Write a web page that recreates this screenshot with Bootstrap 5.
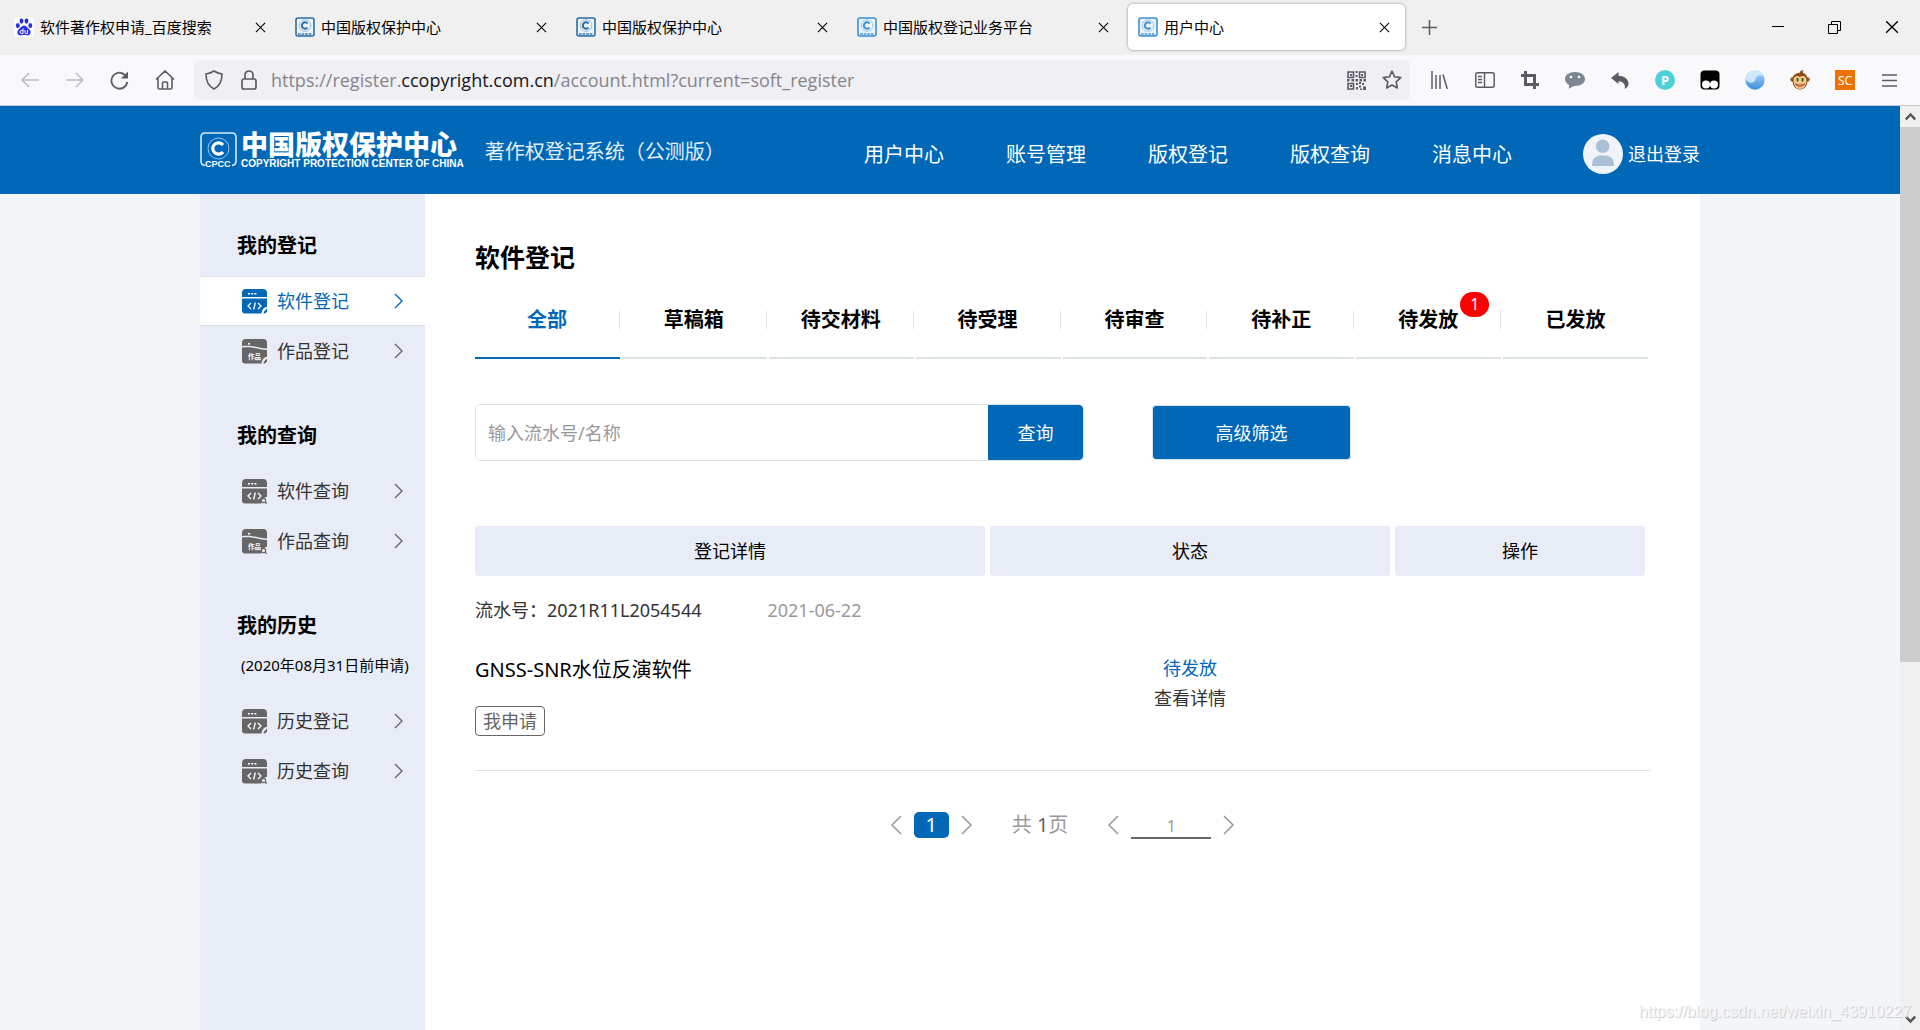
<!DOCTYPE html>
<html lang="zh-CN">
<head>
<meta charset="utf-8">
<meta name="viewport" content="width=device-width, initial-scale=1">
<title>用户中心</title>
<link href="https://cdn.jsdelivr.net/npm/bootstrap@5.3.0/dist/css/bootstrap.min.css" rel="stylesheet">
<style>
:root { --brand: #0068b7; --pale: #e8ecf6; --line: #dce4e8; }
body { font-family: "Noto Sans", "Noto Sans CJK SC", sans-serif; font-size: 18px; line-height: 30px; color: #333; background: #f2f6f9; }
a { color: inherit; text-decoration: none; }
svg { display: block; flex: none; }
button { font: inherit; color: inherit; }
.plain { border: 0; background: none; padding: 0; display: flex; align-items: center; justify-content: center; }

/* browser frame */
.tabstrip { height: 55px; background: #f0f0f0; padding: 4px 0 4px 4px; gap: 4px; font-size: 15px; color: #000; }
.btab { width: 277px; height: 46px; padding: 0 15px 0 10px; gap: 6px; border-radius: 5px; }
.btab.active { background: #fff; box-shadow: 0 0 3px #8888a0; }
.winbtn { width: 57px; height: 46px; }
.toolbar { height: 51px; background: #f9f9fb; border-bottom: 1px solid #c9c9cf; padding: 0 8px 0 7px; color: #5b5b66; }
.tool { width: 45px; height: 40px; }
.urlbar { background: #f0eff4; height: 40px; border-radius: 5px; padding: 0 8px 0 10px; margin: 0 7px; }
.urltext { font-family: "Open Sans", "Noto Sans", sans-serif; font-size: 18px; color: #85858c; white-space: nowrap; padding-left: 13px; }
.urltext b { font-weight: 400; color: #15141a; }

/* page */
.wrap { max-width: 1500px; width: 100%; margin: 0 auto; }
.topbar { background: var(--brand); color: #fff; height: 88px; }
.logo-cn { font-size: 27px; line-height: 28px; font-weight: 900; }
.logo-en { font-size: 10px; line-height: 10px; font-weight: 700; font-family: "Liberation Sans", sans-serif; white-space: nowrap; }
.sys-name { font-size: 20px; color: #e4f0fa; margin-left: 21px; padding-top: 4px; }
.mainnav { gap: 62px; font-size: 20px; margin-right: 71px; padding-top: 10px; }
.logout { padding-top: 8px; gap: 5px; }
.side { width: 225px; flex: none; background: var(--pale); }
.side h2 { font-size: 20px; line-height: 30px; font-weight: 700; color: #000; margin: 0; padding: 45px 37px 15px; }
.side h2.first { padding-top: 37px; }
.side p { font-size: 15px; color: #000; margin: 0; padding: 0 0 21px 41px; line-height: 19px; white-space: nowrap; }
.side-link { height: 50px; padding: 0 22px 0 42px; gap: 10px; color: #333; }
.side-link svg { color: #666; }
.side-link.active { background: #fff; border: solid var(--line); border-width: 1px 0; }
.side-link.active, .side-link.active svg { color: var(--brand); }
.content { background: #fff; padding: 48px 50px 0; min-width: 0; }
.content h1 { font-size: 25px; line-height: 30px; font-weight: 700; color: #000; margin: 0 0 39px; }
.stat { flex: 1 1 0; font-size: 20px; font-weight: 700; color: #000; height: 48px; border-bottom: 2px solid var(--line); margin-right: 2px; text-align: center; position: relative; }
.stat .lbl { display: block; border-right: 1px solid var(--line); line-height: 18px; height: 18px; }
.stat:last-child .lbl { border: 0; }
.stat.active { color: var(--brand); border-color: var(--brand); }
.count { position: absolute; left: 104px; top: -19px; width: 29px; height: 25px; border-radius: 13px; background: red; color: #fff; font-size: 16px; line-height: 25px; font-weight: 400; }
.finder { margin-top: 45px; }
.searchbox { width: 609px; height: 57px; border: 1px solid var(--line); border-radius: 5px; overflow: hidden; }
.searchbox input { border: 0; outline: 0; padding: 0 12px; min-width: 0; }
.searchbox input::placeholder { color: #999; }
.searchbox button { width: 95px; background: var(--brand); color: #fff; border: 0; border-radius: 0 4px 4px 0; }
.filter { width: 199px; height: 55px; background: var(--brand); color: #fff; border: 1px solid var(--line); border-radius: 4px; margin-left: 68px; }
.records { width: 100%; table-layout: fixed; border-bottom: 1px solid var(--line); margin-top: 65px; }
.records th { font-weight: 400; color: #000; text-align: center; padding: 0 5px 0 0; }
.records th div { background: var(--pale); border-radius: 3px; line-height: 50px; }
.records td { padding: 0 5px 0 0; vertical-align: top; }
.c-state { width: 405px; } .c-act { width: 255px; }
.rec-head { padding: 19px 0 28px; gap: 66px; }
.rec-date { color: #999; }
.rec-name { font-size: 20px; color: #000; padding: 2px 0 21px; }
.rec-tag { padding-bottom: 34px; }
.tagbox { display: block; width: fit-content; border: 1px solid #666; border-radius: 4px; color: #666; line-height: 28px; padding: 0 7px; }
.state { color: var(--brand); }
.pager { color: #999; margin-top: 39px; height: 30px; font-size: 20px; }
.cur { width: 35px; height: 26px; border-radius: 5px; background: var(--brand); color: #fff; border: 0; line-height: 26px; padding: 0; margin: 0 12px; }
.total { margin: 0 39px; }
.total .num { color: #666; }
.goto { width: 80px; height: 28px; border: 0; border-bottom: 2px solid #666; color: #999; text-align: center; outline: 0; padding: 4px 0 0; margin: 0 12px; font-size: 16px; background: none; }
.vscroll { width: 20px; flex: none; background: #f0f0f0; }
.vscroll .thumb { background: #cdcdcd; height: 535px; }
.vscroll button { width: 20px; height: 21px; color: #555; }
.wmark { position: absolute; right: 9px; bottom: 3px; font: 16px/30px "Liberation Sans", sans-serif; color: #f6f7f9; text-shadow: 1px 1px 1px #c4c8cc; }
</style>
<script src="https://cdn.jsdelivr.net/npm/bootstrap@5.3.0/dist/js/bootstrap.bundle.min.js"></script>
</head>
<body class="d-flex flex-column min-vh-100 position-relative">
<svg class="d-none" aria-hidden="true">
  <symbol id="x" viewBox="0 0 12 12"><path d="M1 1l10 10M11 1L1 11" stroke="currentColor" stroke-width="1.2" fill="none"/></symbol>
  <symbol id="fav" viewBox="0 0 20 20"><rect x="1" y="1" width="18" height="18" rx="2" fill="#eaf4fa" stroke="currentColor" stroke-width="1.6"/><circle cx="10" cy="8.500" r="5.800" fill="none" stroke="currentColor" stroke-width=".7" opacity=".6"/><path d="M12.500 6.500a3.200 3.200 0 1 0 0 4" fill="none" stroke="currentColor" stroke-width="2"/><path d="M3 17.300h14" stroke="currentColor" stroke-width="2.400" stroke-dasharray="2.600 1" opacity=".7"/></symbol>
  <symbol id="chev" viewBox="0 0 9 16"><path d="M1 1l7 7-7 7" stroke="currentColor" stroke-width="1.400" fill="none"/></symbol>
  <symbol id="pr" viewBox="0 0 12 20"><path d="M1 1l9 9-9 9" stroke="currentColor" stroke-width="1.500" fill="none"/></symbol>
  <symbol id="pl" viewBox="0 0 12 20"><path d="M11 1l-9 9 9 9" stroke="currentColor" stroke-width="1.500" fill="none"/></symbol>
  <symbol id="code" viewBox="0 0 25 25"><path d="M0 8V4a4 4 0 0 1 4-4h17a4 4 0 0 1 4 4v4zM0 9.400h25V18c-3 0-5 2.500-5.500 6.500H3a3 3 0 0 1-3-3z" fill="currentColor"/><path d="M6 4.700h2M9.200 4.700h2M12.400 4.700h2" stroke="#fff" stroke-width="1.500"/><path d="M9 14l-3 3 3 3M16 14l3 3-3 3M13.300 13.500l-1.600 7" stroke="#fff" stroke-width="1.300" fill="none"/></symbol>
  <symbol id="work" viewBox="0 0 25 25"><path d="M0 7V4a4 4 0 0 1 4-4h17a4 4 0 0 1 4 4v5.500c-8 0-14-4-25-2.500zM0 8.500c11-1.500 17 2.500 25 2.500v7c-3 0-5 2.500-5.500 6.500H3a3 3 0 0 1-3-3z" fill="currentColor"/><path d="M6 4.700h2" stroke="#fff" stroke-width="1.500"/><text x="6" y="19.500" font-size="6.500" font-weight="700" fill="#fff">作品</text></symbol>
  <symbol id="pen" viewBox="0 0 25 25"><path d="M21.500 24.500l.5-2 3-3v3l-2 2z" fill="currentColor"/></symbol>
  <symbol id="lens" viewBox="0 0 25 25"><circle cx="21.500" cy="21.500" r="2.200" fill="#e8ecf6" stroke="currentColor" stroke-width="1.200"/><path d="M23 23l2 2" stroke="currentColor" stroke-width="1.200"/></symbol>
</svg>

<header>
  <div class="tabstrip d-flex align-items-start">
    <div class="btab d-flex align-items-center">
      <svg width="20" height="20" viewBox="0 0 20 20"><rect width="20" height="20" rx="3" fill="#fff"/><g fill="#2932e1"><ellipse cx="3.800" cy="8.500" rx="2" ry="2.600"/><ellipse cx="7.500" cy="4" rx="1.900" ry="2.700"/><ellipse cx="12.500" cy="4" rx="1.900" ry="2.700"/><ellipse cx="16.300" cy="8.500" rx="2" ry="2.600"/><path d="M10 8.500c2.500 0 3.500 2.500 5.500 4.300 2.300 2.200 1 5.700-2 5.700-1.500 0-2-.4-3.500-.4s-2 .4-3.500.4c-3 0-4.300-3.500-2-5.700C6.500 11 7.500 8.500 10 8.500z"/></g><path d="M9 11.500v5H7.500a1.500 1.500 0 0 1 0-3H9M11 13v2.500q0 1 1 1h1.500V13" fill="none" stroke="#fff" stroke-width="1"/></svg>
      <a href="#" class="flex-grow-1">软件著作权申请_百度搜索</a>
      <button class="plain" aria-label="关闭"><svg width="11" height="11"><use href="#x"/></svg></button>
    </div>
    <div class="btab d-flex align-items-center"><svg width="20" height="20" color="#2c6fa3"><use href="#fav"/></svg><a href="#" class="flex-grow-1">中国版权保护中心</a><button class="plain" aria-label="关闭"><svg width="11" height="11"><use href="#x"/></svg></button></div>
    <div class="btab d-flex align-items-center"><svg width="20" height="20" color="#2c6fa3"><use href="#fav"/></svg><a href="#" class="flex-grow-1">中国版权保护中心</a><button class="plain" aria-label="关闭"><svg width="11" height="11"><use href="#x"/></svg></button></div>
    <div class="btab d-flex align-items-center"><svg width="20" height="20" color="#3d8fd0"><use href="#fav"/></svg><a href="#" class="flex-grow-1">中国版权登记业务平台</a><button class="plain" aria-label="关闭"><svg width="11" height="11"><use href="#x"/></svg></button></div>
    <div class="btab active d-flex align-items-center"><svg width="20" height="20" color="#3d8fd0"><use href="#fav"/></svg><a href="#" class="flex-grow-1">用户中心</a><button class="plain" aria-label="关闭"><svg width="11" height="11"><use href="#x"/></svg></button></div>
    <button class="plain winbtn me-auto" aria-label="新标签页"><svg width="15" height="15" viewBox="0 0 15 15" class="me-3"><path d="M7.500 0v15M0 7.500h15" stroke="#5b5b66" stroke-width="1.500"/></svg></button>
    <div class="d-flex">
      <button class="plain winbtn" aria-label="最小化"><svg width="12" height="12" viewBox="0 0 12 12"><path d="M0 5.500h12" stroke="#000"/></svg></button>
      <button class="plain winbtn" aria-label="还原"><svg width="13" height="13" viewBox="0 0 13 13"><path d="M.5 3.500h9v9h-9zM3.500 3V.5h9v9H10" fill="none" stroke="#000"/></svg></button>
      <button class="plain winbtn" aria-label="关闭窗口"><svg width="14" height="14"><use href="#x"/></svg></button>
    </div>
  </div>
  <div class="toolbar d-flex align-items-center">
    <button class="plain tool" aria-label="后退"><svg width="18" height="16" viewBox="0 0 18 16"><path d="M18 8H1M8 1L1 8l7 7" fill="none" stroke="#bcbcc2" stroke-width="1.500"/></svg></button>
    <button class="plain tool" aria-label="前进"><svg width="18" height="16" viewBox="0 0 18 16"><path d="M0 8h17M10 1l7 7-7 7" fill="none" stroke="#bcbcc2" stroke-width="1.500"/></svg></button>
    <button class="plain tool" aria-label="刷新"><svg width="19" height="19" viewBox="0 0 19 19"><path d="M16.500 6A8 8 0 1 0 17.300 11" fill="none" stroke="currentColor" stroke-width="1.800"/><path d="M18 .5v7h-7z" fill="currentColor"/></svg></button>
    <button class="plain tool" aria-label="主页"><svg width="20" height="20" viewBox="0 0 20 20"><path d="M1 9.500L10 1l9 8.500M3 8v9.500q0 1.500 1.500 1.500h11q1.500 0 1.500-1.500V8M7.500 19v-6q0-1 1-1h3q1 0 1 1v6" fill="none" stroke="currentColor" stroke-width="1.600"/></svg></button>
    <div class="urlbar d-flex align-items-center flex-grow-1">
      <svg width="20" height="20" viewBox="0 0 20 20" class="me-3"><path d="M10 1c3 2 5 2.500 8 3 0 7-2 12-8 15C4 16 2 11 2 4c3-.5 5-1 8-3z" fill="none" stroke="currentColor" stroke-width="1.600"/></svg>
      <svg width="18" height="20" viewBox="0 0 18 20"><rect x="2" y="9" width="14" height="10" rx="2" fill="none" stroke="currentColor" stroke-width="1.700"/><path d="M5 9V5a4 4 0 0 1 8 0v4" fill="none" stroke="currentColor" stroke-width="1.700"/></svg>
      <div class="urltext flex-grow-1">https://register.<b>ccopyright.com.cn</b>/account.html?current=soft_register</div>
      <button class="plain me-3" aria-label="二维码"><svg width="19" height="19" viewBox="0 0 19 19"><g fill="none" stroke="currentColor" stroke-width="1.600"><path d="M1 1h5.500v5.500H1zM12.500 1H18v5.500h-5.500zM1 12.500h5.500V18H1z"/></g><path d="M3 3h2v2H3zM14 3h2v2h-2zM3 14h2v2H3zM8.500 0h2v2h-2zM8.500 4h2v2h-2zM0 8h2.500v2.500H0zM4.500 8H7v2.500H4.500zM8.500 8H11v2.500H8.500zM12.500 8H15v2.500h-2.500zM16.500 8H19v2.500h-2.500zM9 12h2v2H9zM12 11h2v2h-2zM15 12h2v2h-2zM12 14.500h2v2h-2zM9 16h2v2.500H9zM16 15.500h3V19h-3zM13 17.500h2V19h-2z" fill="currentColor"/></svg></button>
      <button class="plain" aria-label="书签"><svg width="20" height="20" viewBox="0 0 20 20"><path d="M10 1.200l2.600 5.600 6.100.8-4.500 4.200 1.200 6.200L10 15l-5.400 3 1.200-6.200L1.300 7.600l6.100-.8z" fill="none" stroke="currentColor" stroke-width="1.600" stroke-linejoin="round"/></svg></button>
    </div>
    <div class="d-flex">
      <button class="plain tool" aria-label="书库"><svg width="17" height="18" viewBox="0 0 17 18"><path d="M1 0v18M5 4v14M9 4v14M12 3.500L16.300 18" stroke="currentColor" stroke-width="1.500" fill="none"/></svg></button>
      <button class="plain tool" aria-label="侧栏"><svg width="20" height="16" viewBox="0 0 20 16"><rect x=".8" y=".8" width="18.400" height="14.400" rx="2" fill="none" stroke="currentColor" stroke-width="1.500"/><path d="M9.500 1v14M3 4.500h4M3 7.500h4M3 10.500h4" stroke="currentColor" stroke-width="1.400"/></svg></button>
      <button class="plain tool" aria-label="截图"><svg width="18" height="18" viewBox="0 0 18 18"><path d="M4.500 0v13.500H18M0 4.500h13.500V18" fill="none" stroke="currentColor" stroke-width="3"/></svg></button>
      <button class="plain tool" aria-label="聊天"><svg width="20" height="17" viewBox="0 0 20 17"><path d="M10 0c6 0 10 3 10 7s-4 7-10 7c-2 0-3 1.500-7 2.700 1.500-1.500 1.300-2.700.8-4C1.500 11.500 0 9.500 0 7c0-4 4-7 10-7z" fill="#7b8792"/><circle cx="6" cy="5" r="1.300" fill="#fff"/><circle cx="14" cy="5" r="1.300" fill="#fff"/></svg></button>
      <button class="plain tool" aria-label="撤销"><svg width="18" height="17" viewBox="0 0 18 17"><path d="M0 6l7.500-6v3.700C14 4 17.500 7.500 17.500 11.500c0 2.500-1.500 4.500-4 5.500 1.500-4-1-7.500-6-7.700V12z" fill="currentColor"/></svg></button>
      <button class="plain tool" aria-label="P"><svg width="20" height="20" viewBox="0 0 20 20"><circle cx="10" cy="10" r="10" fill="#4dd0d8"/><text x="6" y="14.500" font-size="13" font-weight="700" fill="#fff">P</text></svg></button>
      <button class="plain tool" aria-label="脚本"><svg width="20" height="20" viewBox="0 0 20 20"><rect x=".5" y=".5" width="19" height="19" rx="4" fill="#000"/><circle cx="6" cy="14.500" r="4" fill="#fff"/><circle cx="14" cy="14.500" r="4" fill="#fff"/></svg></button>
      <button class="plain tool" aria-label="水球"><svg width="20" height="20" viewBox="0 0 20 20"><defs><linearGradient id="ball" x2="0" y2="1"><stop stop-color="#b9dcf5"/><stop offset="1" stop-color="#3a8ee0"/></linearGradient></defs><circle cx="10" cy="10" r="9.700" fill="url(#ball)"/><path d="M.8 10C1.500 4 5 1 10 .8c4 .2 7 2 8.500 5-5-1.500-7 0-8 3.500S6 14.500.8 10z" fill="#d9eefb" opacity=".85"/></svg></button>
      <button class="plain tool" aria-label="猴子"><svg width="20" height="20" viewBox="0 0 20 20"><circle cx="2.500" cy="9.500" r="2.200" fill="#9b5418"/><circle cx="17.500" cy="9.500" r="2.200" fill="#9b5418"/><path d="M2.500 10c0-5 3-7 7-7 0-1.500 2-3 4-3-1 1-1 2 0 3.300 3 .7 4 3.700 4 6.700 0 6-3 9.500-7.500 9.500S2.500 16 2.500 10z" fill="#8c4a15"/><path d="M3.500 10c0-4 4.500-5 6.500-3 2-2 6.500-1 6.500 3 0 5-2 9-6.500 9S3.500 15 3.500 10z" fill="#f3c987"/><path d="M7.500 8v3.500M12.500 8v3.500" stroke="#185a3c" stroke-width="1.700"/><path d="M5.500 14c2.500 1.500 6.500 1.500 9 0-1 3-8 3-9 0z" fill="#fff" stroke="#a11" stroke-width=".8"/></svg></button>
      <button class="plain tool" aria-label="SC"><svg width="20" height="20" viewBox="0 0 20 20"><rect width="20" height="20" fill="#ee7203"/><text x="3" y="14.500" font-size="12" fill="#fff">SC</text></svg></button>
      <button class="plain tool" aria-label="菜单"><svg width="15" height="13" viewBox="0 0 15 13"><path d="M0 1h15M0 6.500h15M0 12h15" stroke="currentColor" stroke-width="1.500"/></svg></button>
    </div>
  </div>
</header>

<div class="d-flex flex-grow-1">
  <div class="flex-grow-1 d-flex flex-column">
    <nav class="topbar d-flex">
      <div class="wrap d-flex align-items-center">
        <a href="#" class="d-flex align-items-center" aria-label="中国版权保护中心">
          <svg width="37" height="36" viewBox="0 0 37 36" class="me-1" fill="none" stroke="#fff"><path d="M5 33.500Q1 33 1 29V5q0-4 4-4h27q4 0 4 4v24q0 4-4 4.500" stroke-width="1.600" stroke="#d6e9f7"/><circle cx="18.500" cy="16.500" r="10.500" stroke="#9cc6e5"/><path d="M23 13a5.700 5.700 0 1 0 0 7" stroke-width="3.200"/><text x="5" y="35" font-size="9" font-weight="700" font-family="Liberation Sans, sans-serif" fill="#fff" stroke="none">CPCC</text></svg>
          <span><span class="logo-cn d-block">中国版权保护中心</span><span class="logo-en d-block">COPYRIGHT PROTECTION CENTER OF CHINA</span></span>
        </a>
        <span class="sys-name me-auto">著作权登记系统（公测版）</span>
        <div class="mainnav d-flex">
          <a href="#">用户中心</a><a href="#">账号管理</a><a href="#">版权登记</a><a href="#">版权查询</a><a href="#">消息中心</a>
        </div>
        <a href="#" class="logout d-flex align-items-center">
          <svg width="40" height="40" viewBox="0 0 40 40"><circle cx="20" cy="20" r="20" fill="#f0f4f9"/><circle cx="19.700" cy="12.200" r="6.700" fill="#a9c0d6"/><path d="M9 32v-1c0-6 4-9.500 8-9.500h6c4 0 8 3.500 8 9.500v1z" fill="#a9c0d6"/></svg>退出登录
        </a>
      </div>
    </nav>
    <div class="wrap d-flex flex-grow-1">
      <aside class="side">
        <h2 class="first">我的登记</h2>
        <a href="#" class="side-link active d-flex align-items-center"><svg width="25" height="25"><use href="#code"/><use href="#pen"/></svg><span class="flex-grow-1">软件登记</span><svg width="9" height="16"><use href="#chev"/></svg></a>
        <a href="#" class="side-link d-flex align-items-center"><svg width="25" height="25"><use href="#work"/><use href="#pen"/></svg><span class="flex-grow-1">作品登记</span><svg width="9" height="16"><use href="#chev"/></svg></a>
        <h2>我的查询</h2>
        <a href="#" class="side-link d-flex align-items-center"><svg width="25" height="25"><use href="#code"/><use href="#lens"/></svg><span class="flex-grow-1">软件查询</span><svg width="9" height="16"><use href="#chev"/></svg></a>
        <a href="#" class="side-link d-flex align-items-center"><svg width="25" height="25"><use href="#work"/><use href="#lens"/></svg><span class="flex-grow-1">作品查询</span><svg width="9" height="16"><use href="#chev"/></svg></a>
        <h2>我的历史</h2>
        <p>(2020年08月31日前申请)</p>
        <a href="#" class="side-link d-flex align-items-center"><svg width="25" height="25"><use href="#code"/><use href="#pen"/></svg><span class="flex-grow-1">历史登记</span><svg width="9" height="16"><use href="#chev"/></svg></a>
        <a href="#" class="side-link d-flex align-items-center"><svg width="25" height="25"><use href="#code"/><use href="#lens"/></svg><span class="flex-grow-1">历史查询</span><svg width="9" height="16"><use href="#chev"/></svg></a>
      </aside>
      <main class="content flex-grow-1">
        <h1>软件登记</h1>
        <div class="d-flex">
          <a href="#" class="stat active"><span class="lbl">全部</span></a>
          <a href="#" class="stat"><span class="lbl">草稿箱</span></a>
          <a href="#" class="stat"><span class="lbl">待交材料</span></a>
          <a href="#" class="stat"><span class="lbl">待受理</span></a>
          <a href="#" class="stat"><span class="lbl">待审查</span></a>
          <a href="#" class="stat"><span class="lbl">待补正</span></a>
          <a href="#" class="stat"><span class="lbl">待发放</span><span class="count">1</span></a>
          <a href="#" class="stat"><span class="lbl">已发放</span></a>
        </div>
        <form class="finder d-flex align-items-center">
          <div class="searchbox d-flex"><input type="text" class="flex-grow-1" placeholder="输入流水号/名称" aria-label="输入流水号/名称"><button type="button">查询</button></div>
          <button type="button" class="filter">高级筛选</button>
        </form>
        <table class="records">
          <thead><tr><th><div>登记详情</div></th><th class="c-state"><div>状态</div></th><th class="c-act"><div>操作</div></th></tr></thead>
          <tbody>
            <tr><td colspan="3"><div class="rec-head d-flex"><span>流水号：2021R11L2054544</span><span class="rec-date">2021-06-22</span></div></td></tr>
            <tr>
              <td><div class="rec-name">GNSS-SNR水位反演软件</div><div class="rec-tag"><span class="tagbox">我申请</span></div></td>
              <td class="text-center"><a href="#" class="d-block state">待发放</a><a href="#" class="d-block">查看详情</a></td>
              <td></td>
            </tr>
          </tbody>
        </table>
        <div class="pager d-flex align-items-center justify-content-center">
          <button class="plain" aria-label="上一页"><svg width="12" height="20"><use href="#pl"/></svg></button>
          <button class="cur">1</button>
          <button class="plain" aria-label="下一页"><svg width="12" height="20"><use href="#pr"/></svg></button>
          <span class="total">共 <span class="num">1</span>页</span>
          <button class="plain" aria-label="减"><svg width="12" height="20"><use href="#pl"/></svg></button>
          <input class="goto" type="text" value="1" aria-label="页码">
          <button class="plain" aria-label="加"><svg width="12" height="20"><use href="#pr"/></svg></button>
        </div>
      </main>
    </div>
  </div>
  <div class="vscroll d-flex flex-column">
    <button class="plain" aria-label="向上滚动"><svg width="11" height="9" viewBox="0 0 11 9"><path d="M.8 7.500L5.500 2.500l4.700 5" fill="none" stroke="currentColor" stroke-width="2.500"/></svg></button>
    <div class="thumb"></div>
    <button class="plain mt-auto" aria-label="向下滚动"><svg width="11" height="9" viewBox="0 0 11 9"><path d="M.8 1.500l4.700 5 4.700-5" fill="none" stroke="currentColor" stroke-width="2.500"/></svg></button>
  </div>
</div>
<div class="wmark">https://blog.csdn.net/weixin_43910227</div>
</body>
</html>
